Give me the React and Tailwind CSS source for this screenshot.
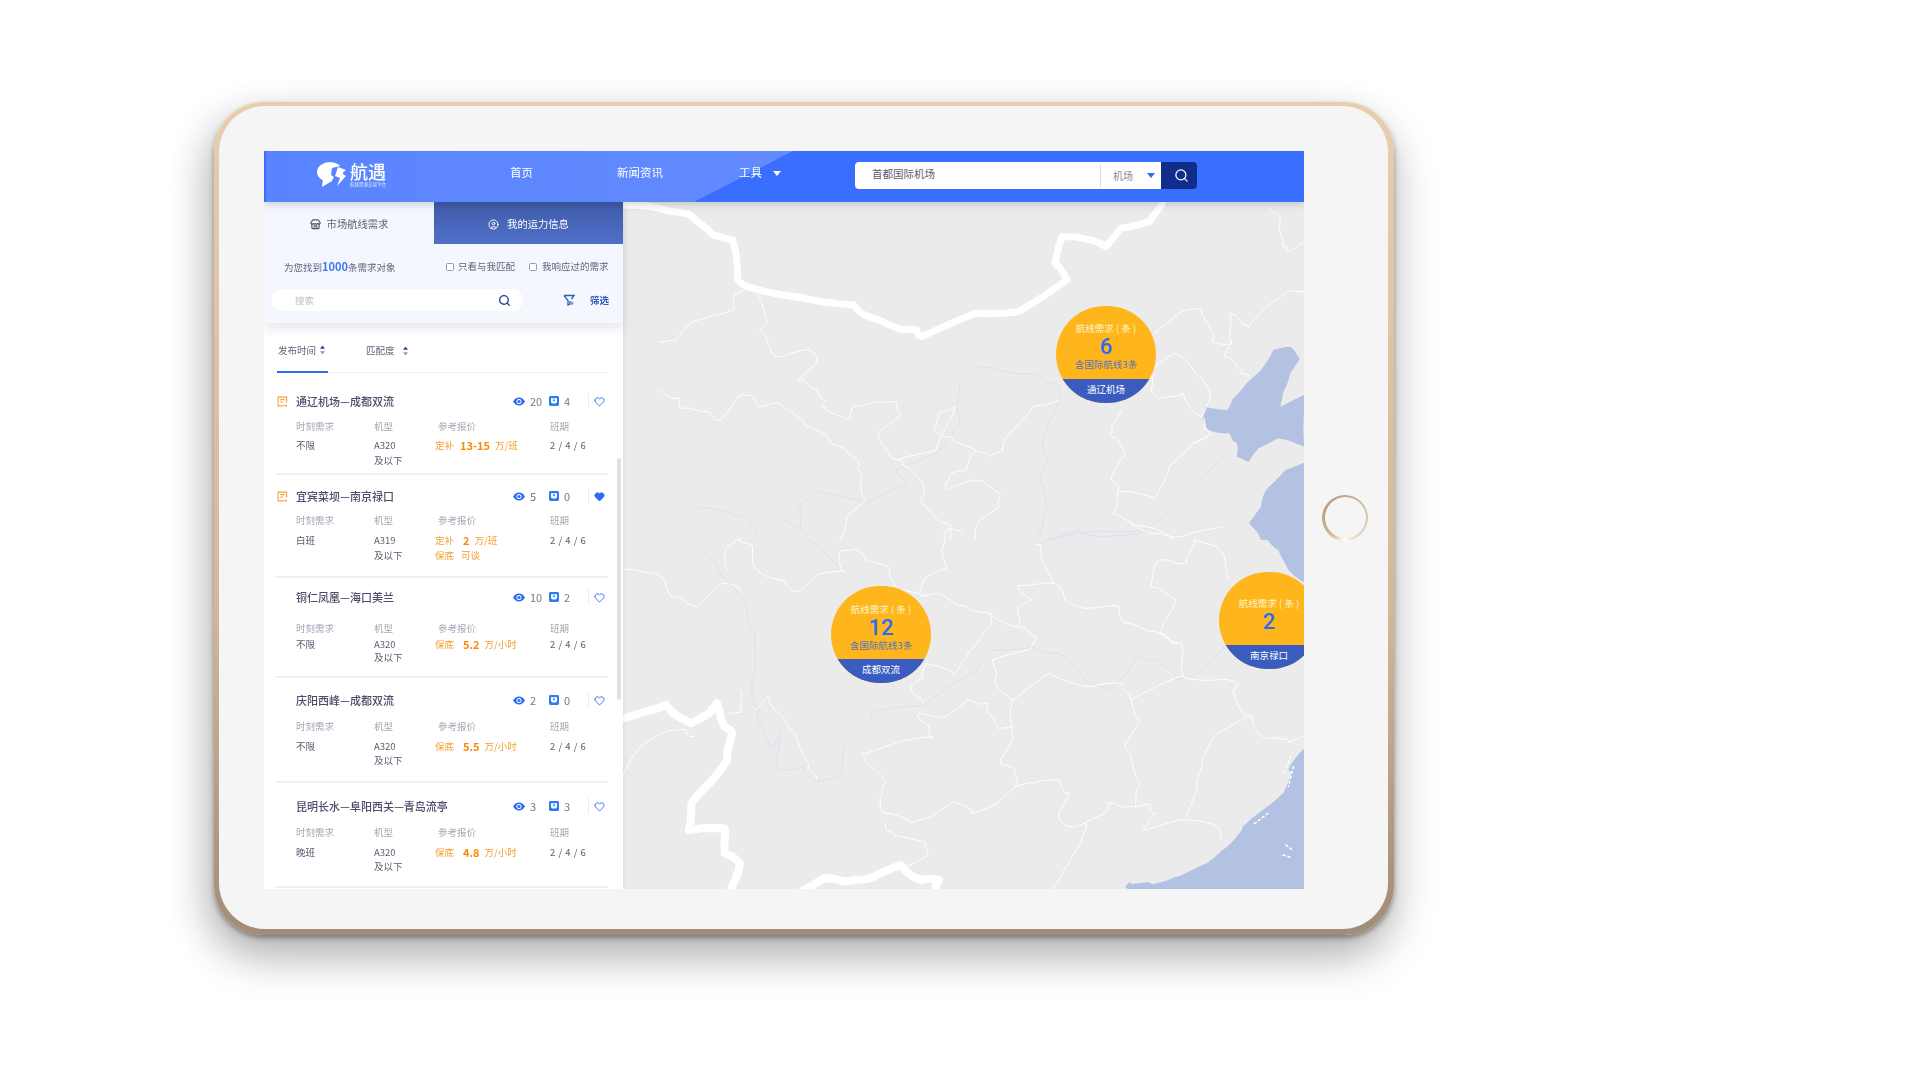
import React from 'react';
import { Search, Heart, Store, CircleUser } from 'lucide-react';

const orders = [
  { title: '通辽机场—成都双流', views: 20, msgs: 4, flag: true, slot: '不限', plane: 'A320', price: [['定补', '13-15', '万/班', 'ml-[6px]']], box: 'h-[102px] pt-[20px]', labels: 'mt-[11px]', values: 'mt-[6px] leading-[15px]' },
  { title: '宜宾菜坝—南京禄口', views: 5, msgs: 0, flag: true, liked: true, slot: '白班', plane: 'A319', price: [['定补', '2', '万/班', 'ml-[9px]']], extra: true, box: 'h-[103px] pt-[13px]', labels: 'mt-[10px]', values: 'mt-[7px] leading-[15px]' },
  { title: '铜仁凤凰—海口美兰', views: 10, msgs: 2, slot: '不限', plane: 'A320', price: [['保底', '5.2', '万/小时', 'ml-[9px]']], box: 'h-[100px] pt-[11px]', labels: 'mt-[17px]', values: 'mt-[4px] leading-[13px]' },
  { title: '庆阳西峰—成都双流', views: 2, msgs: 0, slot: '不限', plane: 'A320', price: [['保底', '5.5', '万/小时', 'ml-[9px]']], box: 'h-[105px] pt-[14px]', labels: 'mt-[12px]', values: 'mt-[7px] leading-[14px]' },
  { title: '昆明长水—阜阳西关—青岛流亭', views: 3, msgs: 3, slot: '晚班', plane: 'A320', price: [['保底', '4.8', '万/小时', 'ml-[9px]']], box: 'h-[105px] pt-[15px]', labels: 'mt-[12px]', values: 'mt-[7px] leading-[14px]' },
];

// map outlines are traced on two crops of the picture, each group has its own scale
const jag = (s, amt = 5, steps = 5) => {
  const n = s.trim().split(/\s+/).map(Number);
  let d = `M${n[0]} ${n[1]}`;
  for (let i = 2; i < n.length; i += 2) {
    const [x0, y0, x1, y1] = [n[i - 2], n[i - 1], n[i], n[i + 1]];
    for (let k = 1; k <= steps; k++) {
      const off = k === steps ? 0 : Math.sin((i + k) * 12.9898 + x1) * amt;
      d += ` L${(x0 + ((x1 - x0) * k) / steps + off).toFixed(1)} ${(y0 + ((y1 - y0) * k) / steps - off).toFixed(1)}`;
    }
  }
  return d;
};

const northLines = [
  '0 605 30 605 60 550 100 530 150 510 155 460 175 450',
  '195 455 220 550 205 570 238 650 270 640 310 632 322 670 285 720 315 745 340 780 340 800 385 840 400 797 445 785 490 790 495 830 455 870 455 910 490 960 570 930 610 800',
  '0 750 40 775 45 805 100 815 125 840 160 770 185 765 210 800 245 790 300 860 350 900 385 930 410 975 415 1010 425 1080 385 1130 370 1200',
  '490 960 510 980 545 1050 540 1090 590 1150 600 1200',
  '650 930 635 960 635 990 600 1000 590 1050 650 1020 700 1060 700 1100 660 1140 650 1200',
  '825 780 770 800 740 850 715 890 710 930 680 950 650 930 600 890 570 880 575 820 610 800',
  '950 810 930 860 930 890 960 940 930 1020 945 1055 1020 1075 1050 980 1100 910 1140 880',
  '945 1055 935 1120 1000 1160 1060 1200',
  '1020 680 1060 640 1105 700 1135 770 1115 830 1080 760 1030 775 1015 740 1020 680',
  '1020 580 1070 520 1105 505 1130 550 1140 605 1180 610 1175 520 1215 560 1260 490 1300 450 1329 460',
  '1180 610 1165 650 1200 690 1215 710',
  '1255 200 1280 240 1285 320 1300 335 1329 305',
  '1115 830 1125 870 1130 890 1100 910',
];
const northRivers = [
  '610 800 615 730 650 675 700 690 760 700 815 730 825 780 810 830 790 900 800 950 785 1020 795 1120 775 1200',
  '610 800 615 860 570 940 490 985 510 1030 420 1090 330 1050 285 1100 290 1170',
  '80 1105 170 1130 200 1190',
  '810 1200 880 1175 1000 1170 1060 1110 1180 920',
];
const southLines = [
  '210 150 210 80 235 55 260 80 270 150 320 180 350 215 385 165 440 155 430 95 465 85 480 120 530 150 540 200 590 225 620 220 680 260 725 280 780 320 815 350 800 390 730 420 735 480 770 540',
  '590 225 600 170 640 145 635 70 640 30 670 30',
  '725 280 730 310 700 370 680 410 655 465 600 430 595 470 570 500 595 550',
  '780 320 780 260 810 240 780 195 850 190 870 230 910 265 980 260 990 310 1050 335 1100 370 1105 470',
  '850 190 825 90 815 75',
  '1090 370 1060 340 1090 240 1040 200 1055 120 1110 130 1125 60 1175 90 1195 180',
  '770 540 770 660 745 720 775 750 775 800 740 850 690 880 655 845 610 890 570 910 520 880 510 830 520 790 475 700 520 680 565 660 615 655 600 610 585 580 640 590 680 540 720 550 740 620 770 620',
  '775 800 810 790 860 780 880 820 860 890 885 920 910 910 950 880 955 850 1000 860 1040 855 1050 880 1025 930 1100 900 1170 920 1175 960',
  '1010 860 1020 790 990 680 1020 600 1000 530 985 490 925 500 840 460 770 540',
  '1000 540 1080 480 1105 470 1170 480 1210 490 1205 520 1230 590 1240 590 1260 650 1290 650 1310 665 1340 650',
  '1230 590 1170 640 1140 720 1130 790 1110 890',
  '910 910 905 960 880 1030 845 1110',
  '520 910 530 935 600 970 600 1010 560 1040',
  '5 770 40 680 80 640 130 630 145 650',
  '5 150 70 160 100 230 150 260 200 190 235 210',
  '265 570 290 530 330 620 370 730 385 780',
  '235 510 240 575 215 575',
  '1000 0 1040 40 1100 50 1180 20',
];
const southRivers = [
  '110 0 200 170 250 270 265 340 260 480 270 570 295 690 315 630 310 750 360 740 385 785 440 760 440 680 490 600 500 570 590 560 655 490 700 450 730 390 810 380 860 400 920 490 955 515 1000 450 1020 405 1050 420 1090 480 1135 460 1190 370',
  '815 75 880 40 900 30 950 50 1030 35',
  '320 0 370 60 440 150',
];

const MapView = () => (
  <svg viewBox="623 202 681 687" className="absolute inset-0 w-full h-full">
    <rect x="623" y="202" width="681" height="687" fill="#ebebeb" />
    <g transform="translate(660 140) scale(0.4847 0.3333)" fill="none" strokeLinejoin="round" strokeLinecap="round">
      <path fill="#b3c2e2" d={jag('1265 630 1300 620 1320 655 1300 700 1285 760 1280 800 1329 765 1329 920 1275 895 1235 925 1215 965 1190 950 1190 910 1175 880 1130 870 1118 835 1125 800 1170 810 1180 780 1210 730 1240 690 1265 630', 3, 3) + ' Z'} />
      <path fill="#b3c2e2" d={jag('1329 968 1290 990 1250 1050 1240 1100 1215 1150 1240 1200 1329 1200', 3, 3) + ' Z'} />
      {northRivers.map((p) => <path key={p} d={jag(p)} stroke="#d8e2f4" strokeWidth="1" vectorEffect="non-scaling-stroke" />)}
      {northLines.map((p) => <path key={p} d={jag(p)} stroke="#fff" strokeWidth="1" vectorEffect="non-scaling-stroke" />)}
      <path d={jag('-80 195 0 205 60 222 110 285 150 300 160 420 180 440 300 475 400 495 430 530 490 565 530 570 540 590 650 520 740 515 790 470 840 420 815 370 830 290 870 295 920 320 950 265 1010 245 1035 195 1045 160', 3, 3)} stroke="#fff" strokeWidth="7" vectorEffect="non-scaling-stroke" />
    </g>
    <g transform="translate(620 520) scale(0.5102 0.3333)" fill="none" strokeLinejoin="round" strokeLinecap="round">
      <path fill="#b3c2e2" d={jag('1235 0 1270 60 1290 90 1310 150 1345 190 1345 0', 2, 3) + ' Z'} />
      <path fill="#b3c2e2" d={jag('1345 680 1310 750 1300 820 1260 870 1220 920 1190 980 1150 1030 1090 1070 1040 1090 1000 1085 995 1110 1345 1110', 8, 5) + ' Z'} />
      <path d="M1305 975 L1318 990 M1300 1005 L1315 1012 M1315 710 L1300 760 M1320 740 L1310 800 M1270 880 L1240 915" stroke="#fff" strokeWidth="1.5" strokeDasharray="2 3" vectorEffect="non-scaling-stroke" />
      {southRivers.map((p) => <path key={p} d={jag(p)} stroke="#d8e2f4" strokeWidth="1" vectorEffect="non-scaling-stroke" />)}
      {southLines.map((p) => <path key={p} d={jag(p)} stroke="#fff" strokeWidth="1" vectorEffect="non-scaling-stroke" />)}
      <path d={jag('-10 600 60 570 90 555 140 610 175 580 190 550 205 620 220 640 210 720 175 790 140 850 135 930 205 925 205 1000 235 1030 215 1115', 4, 3)} stroke="#fff" strokeWidth="8" vectorEffect="non-scaling-stroke" />
      <path d={jag('350 1120 400 1075 440 1085 490 1075 550 1035 590 1080 625 1080 620 1120', 4, 3)} stroke="#fff" strokeWidth="8" vectorEffect="non-scaling-stroke" />
    </g>
  </svg>
);

const Marker = ({ pos, top, title, num, sub, name }) => (
  <div className={`absolute w-[100px] h-[97px] rounded-full overflow-hidden bg-[#feb61c] flex flex-col items-center ${pos}`}>
    <div className={`${top} h-[12px] leading-[12px] text-[9.5px] text-[#fff4cf] whitespace-nowrap`}>{title}</div>
    <div className="mt-[3px] h-[20px] leading-[20px] text-[22px] font-medium font-['Roboto',sans-serif] text-[#2c6cf2]">{num}</div>
    {sub && <div className="mt-[1px] h-[12px] leading-[12px] text-[9.5px] text-[#5a72b8] whitespace-nowrap">{sub}</div>}
    <div className="mt-auto w-full h-[24px] pb-[3px] bg-[#3a5cc0] flex items-center justify-center text-[9.5px] text-white">{name}</div>
  </div>
);

const Eye = () => (
  <svg viewBox="0 0 24 18" className="w-[12px] h-[9px]">
    <path fill="#2d6cf0" d="M12 1C7 1 3 4 0 9c3 5 7 8 12 8s9-3 12-8c-3-5-7-8-12-8z" />
    <circle cx="12" cy="9" r="5" fill="#fff" />
    <circle cx="12" cy="9" r="3.2" fill="#2d6cf0" />
  </svg>
);

const Msg = () => (
  <svg viewBox="0 0 10 10" className="w-[10px] h-[10px]">
    <rect width="10" height="10" rx="1.4" fill="#2d7cf0" />
    <path d="M2 2.2h6v3.2a3 2 0 0 1-6 0z" fill="#fff" />
    <circle cx="5" cy="4.2" r="1" fill="#2d7cf0" />
  </svg>
);

const Flag = () => (
  <svg viewBox="0 0 12 12" fill="none" stroke="#f6a13a" strokeWidth="1.2" className="w-[11px] h-[11px]">
    <path d="M10.5 7V1.2H1.2v9.6h6" />
    <path d="M3.5 4h5M3.5 6.5h3" />
    <path d="M8 10.5h3" strokeWidth="1.6" />
  </svg>
);

const Caret = ({ color }) => (
  <svg viewBox="0 0 8 5" className="w-[8px] h-[5px]">
    <path d="M0 0h8L4 5z" fill={color} />
  </svg>
);

const SortIcon = () => (
  <svg viewBox="0 0 6 11" className="w-[5px] h-[10px]">
    <path d="M3 0l3 4H0z" fill="#24459f" />
    <path d="M3 11L0 7h6z" fill="#8e9bb8" />
  </svg>
);

const OrderRow = ({ order }) => (
  <div className={`${order.box} border-b-2 border-[#f1f1f4]`}>
    <div className="flex items-center h-[16px] pr-[4px]">
      <div className="w-[21px] pl-[2px] flex items-center">{order.flag && <Flag />}</div>
      <div className="text-[11px] font-medium text-[#4c4c69] whitespace-nowrap">{order.title}</div>
      <div className="ml-auto flex items-center text-[11px] text-[#77778a]">
        <div className="w-[36px] flex items-center gap-[5px]"><Eye />{order.views}</div>
        <div className="w-[39px] flex items-center gap-[5px]"><Msg />{order.msgs}</div>
        <div className="w-px h-[16px] bg-[#ececf0]" />
        <Heart className={`ml-[5px] w-[11px] h-[11px] text-[#2d6cf0] ${order.liked ? 'fill-[#2d6cf0]' : ''}`} strokeWidth={2} />
      </div>
    </div>
    <div className={`flex pl-[21px] h-[12px] leading-[12px] text-[9.5px] text-[#a6a6b6] ${order.labels}`}>
      <div className="w-[78px]">时刻需求</div>
      <div className="w-[61px]">机型</div>
      <div className="w-[115px] pl-[3px]">参考报价</div>
      <div>班期</div>
    </div>
    <div className={`flex pl-[21px] text-[9.5px] text-[#5b5b72] ${order.values}`}>
      <div className="w-[78px]">{order.slot}</div>
      <div className="w-[61px]"><div>{order.plane}</div><div>及以下</div></div>
      <div className="w-[115px] text-[#f5a034]">
        {order.price.map(([tag, num, unit, gap]) => (
          <div key={tag} className="flex items-center whitespace-nowrap">
            {tag}
            <span className={`${gap} text-[11px] font-bold text-[#f98a0c]`}>{num}</span>
            <span className="ml-[5px]">{unit}</span>
          </div>
        ))}
        {order.extra && <div className="flex gap-[7px]"><span>保底</span><span>可谈</span></div>}
      </div>
      <div className="tracking-[0.5px]">2 / 4 / 6</div>
    </div>
  </div>
);

const Sidebar = () => (
  <div className="relative z-10 w-[359px] h-full bg-white flex flex-col shadow-[0_0_6px_rgba(0,0,0,0.08)]">
    <div className="bg-[#f4f7fe] shadow-[0_6px_10px_rgba(60,70,110,0.12)]">
      <div className="flex h-[42px] pt-[2px] text-[10.3px]">
        <div className="w-[170px] flex items-center justify-center gap-[6px] text-[#62627a]">
          <Store className="w-[11px] h-[11px] text-[#55556b]" strokeWidth={2.5} />
          市场航线需求
        </div>
        <div className="flex-1 -mt-[2px] flex items-center justify-center gap-[8px] pt-[2px] text-white bg-[linear-gradient(180deg,#3f5ba8,#4f6fc9)]">
          <CircleUser className="w-[11px] h-[11px]" strokeWidth={2} />
          我的运力信息
        </div>
      </div>
      <div className="flex items-center h-[45px] pl-[20px] text-[9.5px] text-[#62627a]">
        <div className="w-[162px] whitespace-nowrap">为您找到<span className="text-[11px] font-bold text-[#3b78ee]">1000</span>条需求对象</div>
        <div className="w-[83px] flex items-center gap-[4px] whitespace-nowrap">
          <span className="w-[8px] h-[8px] rounded-[1.5px] border border-[#9a9aaa] bg-white" />只看与我匹配
        </div>
        <div className="flex items-center gap-[5px] whitespace-nowrap">
          <span className="w-[8px] h-[8px] rounded-[1.5px] border border-[#9a9aaa] bg-white" />我响应过的需求
        </div>
      </div>
      <div className="flex items-center pl-[8px] h-[22px] mb-[12px]">
        <div className="w-[251px] h-full rounded-full bg-white flex items-center pl-[23px] pr-[12px] text-[9.5px] text-[#bdbdc8]">
          搜索
          <Search className="ml-auto w-[13px] h-[13px] text-[#23408f]" strokeWidth={2.5} />
        </div>
        <svg viewBox="0 0 12 12" fill="none" stroke="#2a5fb8" strokeWidth="1.3" className="ml-[40px] w-[12px] h-[12px]">
          <path d="M1 1.5h10L8.5 5" />
          <path d="M1 1.5l4 5V11l2-1V7" />
          <path d="M9 7.5v3.5M7.5 9.2h3" stroke="#6d8fc9" />
        </svg>
        <div className="ml-[15px] text-[9.5px] font-bold text-[#2f5bb5]">筛选</div>
      </div>
    </div>
    <div className="ml-[13px] w-[332px] h-[50px] flex border-b border-[#eeeef2] text-[9.5px] text-[#62627a]">
      <div className="w-[51px] -mb-px pl-px pt-[6px] border-b-2 border-[#2d6cf0] flex items-center gap-[4px] whitespace-nowrap">发布时间 <SortIcon /></div>
      <div className="ml-[38px] pt-[6px] flex items-center gap-[8px] whitespace-nowrap">匹配度 <SortIcon /></div>
    </div>
    <div className="relative flex-1 overflow-hidden">
      <div className="ml-[11px] w-[334px]">
        {orders.map((o) => <OrderRow key={o.title} order={o} />)}
      </div>
      <div className="absolute left-[353px] top-[85px] w-[4px] h-[242px] rounded-full bg-[#e0e0e2]" />
    </div>
  </div>
);

const Header = () => (
  <div className="relative z-20 h-[51px] shrink-0 flex items-center border-l-2 border-[#3a6eff] bg-[#3a6eff] text-white shadow-[0_3px_8px_rgba(0,0,0,0.15)]">
    <div className="absolute inset-0 bg-[linear-gradient(90deg,#5a84ff,#6b90ff)] [clip-path:polygon(0_0,527px_0,428px_100%,0_100%)]" />
    <div className="relative ml-[51px] -mt-[4px] w-[193px] flex items-center">
      <svg viewBox="0 0 30 25" className="w-[30px] h-[25px]">
        <ellipse cx="13" cy="10" rx="13" ry="10" fill="#fff" />
        <path fill="#fff" d="M6 16L5 25l10-6z" />
        <path fill="#5a84ff" d="M15 6l12-3v6l-4 3 3 2-9 11-5-1 5-9-3-2z" />
        <path fill="#fff" d="M21 5l8 3-4 3.5 4 2.5-9 10 3-8-5-2z" />
      </svg>
      <div className="ml-[3px] flex flex-col">
        <div className="text-[18px] leading-[19px] font-medium">航遇</div>
        <div className="text-[4.5px] leading-[6px] text-[#dfe8ff] whitespace-nowrap">航线资源交易平台</div>
      </div>
    </div>
    <div className="relative -mt-[7px] w-[107px] text-[11.5px]">首页</div>
    <div className="relative -mt-[7px] w-[122px] text-[11.5px]">新闻资讯</div>
    <div className="relative -mt-[7px] w-[116px] flex items-center text-[11.5px]">工具<span className="ml-[11px]"><Caret color="#fff" /></span></div>
    <div className="relative -mt-[2px] flex items-center h-[27px]">
      <div className="w-[310px] h-full bg-white rounded-[4px] flex items-center pl-[17px] text-[10.5px] text-[#5b5b72]">
        <div className="w-[228px] pb-[3px]">首都国际机场</div>
        <div className="h-[22px] w-px bg-[#dcdce2]" />
        <div className="ml-[12px] text-[10px] text-[#8a8a98]">机场</div>
        <span className="ml-[14px]"><Caret color="#2d6cf0" /></span>
      </div>
      <div className="w-[36px] h-full -ml-[4px] pl-[4px] rounded-r-[4px] bg-[#0f2d8a] flex items-center justify-center">
        <Search className="w-[15px] h-[15px] text-white" strokeWidth={2} />
      </div>
    </div>
  </div>
);

const App = () => (
  <div className="w-full h-[1080px] overflow-hidden bg-white pl-[214px] pt-[102px] font-['Noto_Sans_CJK_SC','Noto_Sans',sans-serif]">
    <div className="w-[1180px] h-[833px] pt-[4px] pl-[5px] pr-[6px] pb-[6px] rounded-[50px] bg-[linear-gradient(180deg,#e8cdae_0%,#d6b898_60%,#a08c78_100%)] shadow-[0_3px_5px_rgba(60,50,40,0.45),0_22px_45px_rgba(0,0,0,0.24),-10px_14px_40px_rgba(0,0,0,0.12)]">
      <div className="w-full h-full rounded-[46px] bg-[#f5f5f5] flex items-center">
        <div className="ml-[45px] mt-[45px] self-start w-[1040px] h-[738px] shrink-0 flex flex-col overflow-hidden blur-[0.35px]">
          <Header />
          <div className="flex-1 flex min-h-0">
            <Sidebar />
            <div className="relative flex-1 overflow-hidden">
              <MapView />
              <Marker pos="left-[433px] top-[104px]" top="mt-[16px]" title="航线需求 ( 条 )" num="6" sub="含国际航线3条" name="通辽机场" />
              <Marker pos="left-[208px] top-[384px]" top="mt-[17px]" title="航线需求 ( 条 )" num="12" sub="含国际航线3条" name="成都双流" />
              <Marker pos="left-[596px] top-[370px]" top="mt-[25px]" title="航线需求 ( 条 )" num="2" name="南京禄口" />
            </div>
          </div>
        </div>
        <div className="ml-[18px] w-[46px] h-[46px] shrink-0 rounded-full p-[2.5px] bg-[conic-gradient(#bfa68c,#d9c5b0_25%,#f1dfcb_45%,#fff_50%,#d9b894_60%,#b89f86_80%,#bfa68c)]">
          <div className="w-full h-full rounded-full bg-[#f5f5f5]" />
        </div>
      </div>
    </div>
  </div>
);

export default App;
